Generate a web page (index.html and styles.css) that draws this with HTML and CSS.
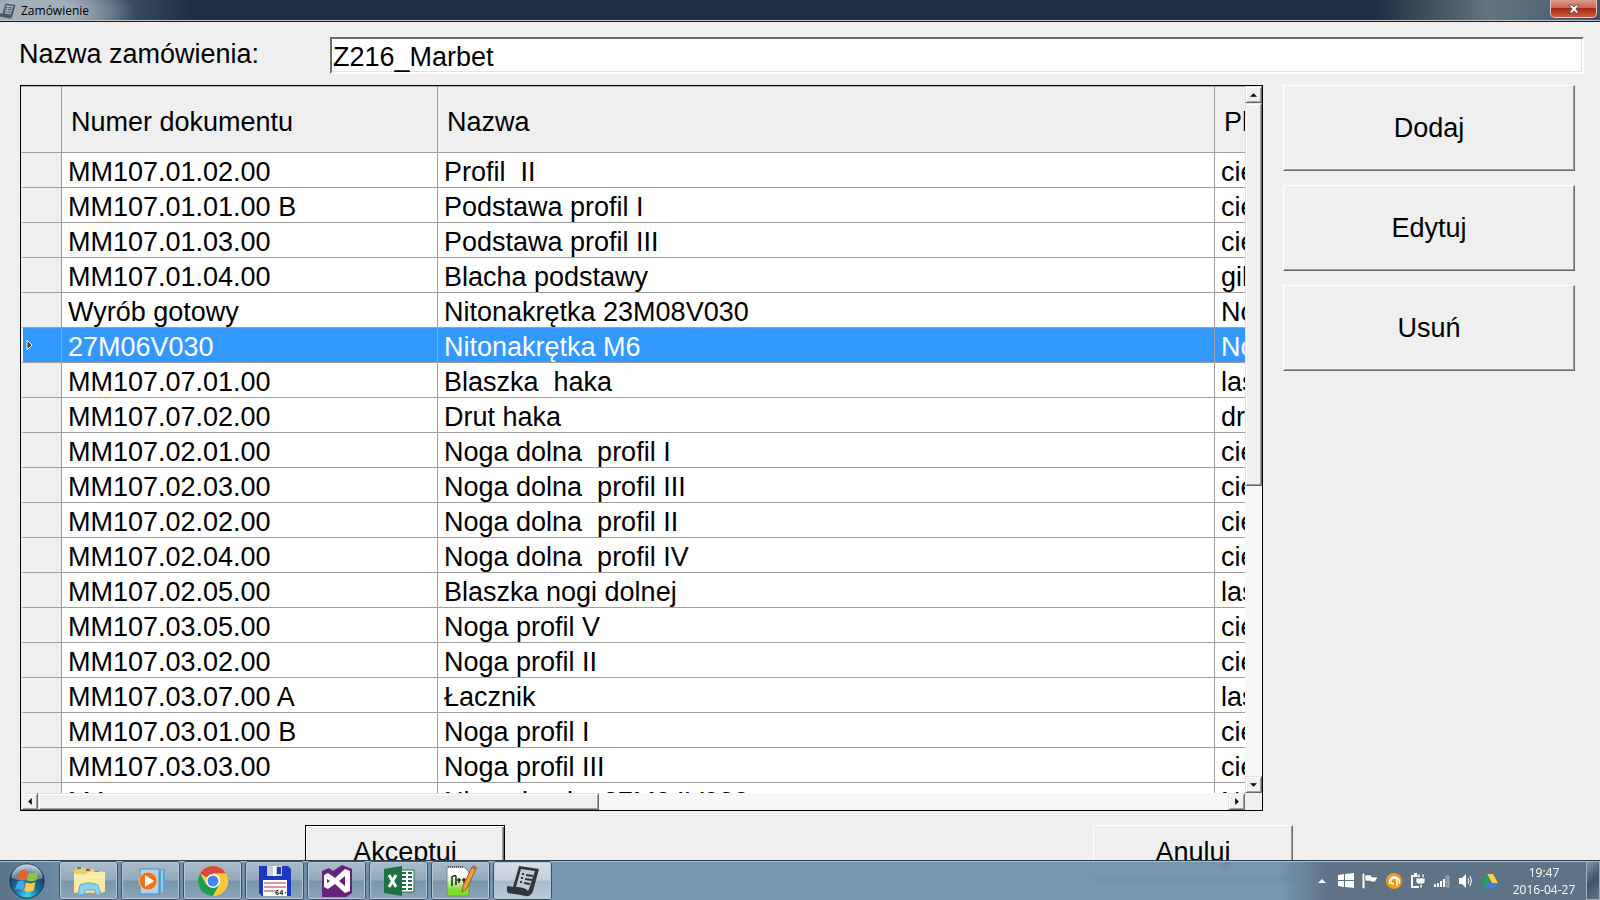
FILE: index.html
```html
<!DOCTYPE html>
<html lang="pl">
<head>
<meta charset="utf-8">
<title>Zamówienie</title>
<link rel="stylesheet" href="styles.css">
</head>
<body>
<div class="window">
  <header class="titlebar">
    <svg class="title-icon" viewBox="0 0 32 32"><path d="M11 1l20 3-6 22q-2 6-6 5L0 27q-1-4 0-6h5z" fill="#4b575f"/><path d="M13 4l14 2-6 18q-3-3-12-3z" fill="#a3aeb6"/><path d="M13 9h2M17 9l7 1M12 13h2M16 13l7 1M11 18h2M15 18l6 1" stroke="#4b575f" stroke-width="2"/></svg>
    <span class="title-text">Zamówienie</span>
    <button class="close" aria-label="Zamknij"><svg viewBox="0 0 12 10"><path d="M1 1h3l2 2 2-2h3L8 5l3 4H8L6 7 4 9H1l3-4z" fill="#fff" stroke="#4a2a2a" stroke-width=".7"/></svg></button>
  </header>
  <form class="name-row">
    <label for="order-name">Nazwa zamówienia:</label>
    <input id="order-name" type="text" value="Z216_Marbet">
  </form>
  <main class="content">
    <section class="grid">
      <div class="viewport">
        <table>
          <colgroup><col class="c-mark"><col class="c-number"><col class="c-name"><col class="c-plan"></colgroup>
          <thead><tr><th></th><th>Numer dokumentu</th><th>Nazwa</th><th>Pl</th></tr></thead>
          <tbody>
            <tr><th></th><td>MM107.01.02.00</td><td>Profil  II</td><td>cie</td></tr>
            <tr><th></th><td>MM107.01.01.00 B</td><td>Podstawa profil I</td><td>cie</td></tr>
            <tr><th></th><td>MM107.01.03.00</td><td>Podstawa profil III</td><td>cie</td></tr>
            <tr><th></th><td>MM107.01.04.00</td><td>Blacha podstawy</td><td>gil</td></tr>
            <tr><th></th><td>Wyrób gotowy</td><td>Nitonakrętka 23M08V030</td><td>No</td></tr>
            <tr class="selected"><th><svg class="marker" viewBox="0 0 7 12"><path d="M1 1l5 5-5 5z" fill="#404040" stroke="#fff"/></svg></th><td>27M06V030</td><td>Nitonakrętka M6</td><td>No</td></tr>
            <tr><th></th><td>MM107.07.01.00</td><td>Blaszka  haka</td><td>las</td></tr>
            <tr><th></th><td>MM107.07.02.00</td><td>Drut haka</td><td>dr</td></tr>
            <tr><th></th><td>MM107.02.01.00</td><td>Noga dolna  profil I</td><td>cie</td></tr>
            <tr><th></th><td>MM107.02.03.00</td><td>Noga dolna  profil III</td><td>cie</td></tr>
            <tr><th></th><td>MM107.02.02.00</td><td>Noga dolna  profil II</td><td>cie</td></tr>
            <tr><th></th><td>MM107.02.04.00</td><td>Noga dolna  profil IV</td><td>cie</td></tr>
            <tr><th></th><td>MM107.02.05.00</td><td>Blaszka nogi dolnej</td><td>las</td></tr>
            <tr><th></th><td>MM107.03.05.00</td><td>Noga profil V</td><td>cie</td></tr>
            <tr><th></th><td>MM107.03.02.00</td><td>Noga profil II</td><td>cie</td></tr>
            <tr><th></th><td>MM107.03.07.00 A</td><td>Łacznik</td><td>las</td></tr>
            <tr><th></th><td>MM107.03.01.00 B</td><td>Noga profil I</td><td>cie</td></tr>
            <tr><th></th><td>MM107.03.03.00</td><td>Noga profil III</td><td>cie</td></tr>
            <tr><th></th><td>M4</td><td>Nitonakrętka 27M04V030</td><td>No</td></tr>
          </tbody>
        </table>
      </div>
      <div class="scroll vertical">
        <button class="arrow" aria-label="W górę"><svg viewBox="0 0 8 4"><path d="M4 0l4 4H0z"/></svg></button>
        <div class="thumb"></div>
        <div class="track"></div>
        <button class="arrow" aria-label="W dół"><svg viewBox="0 0 8 4"><path d="M0 0h8L4 4z"/></svg></button>
      </div>
      <div class="scroll horizontal">
        <button class="arrow" aria-label="W lewo"><svg class="side" viewBox="0 0 4 8"><path d="M4 0v8L0 4z"/></svg></button>
        <div class="thumb"></div>
        <div class="track"></div>
        <button class="arrow" aria-label="W prawo"><svg class="side" viewBox="0 0 4 8"><path d="M0 0l4 4-4 4z"/></svg></button>
      </div>
      <div class="corner"></div>
    </section>
    <aside class="actions">
      <button class="btn">Dodaj</button>
      <button class="btn">Edytuj</button>
      <button class="btn">Usuń</button>
    </aside>
  </main>
  <footer class="confirm">
    <button class="btn default">Akceptuj</button>
    <button class="btn">Anuluj</button>
  </footer>
</div>
<nav class="taskbar">
  <button class="start" aria-label="Start"><svg viewBox="0 0 40 40">
    <defs><radialGradient id="orb" cx=".5" cy=".95" r=".9"><stop offset="0" stop-color="#3fe0f5"/><stop offset=".4" stop-color="#1670a5"/><stop offset=".75" stop-color="#1b4468"/><stop offset="1" stop-color="#9db6c8"/></radialGradient></defs>
    <circle cx="20" cy="20" r="18" fill="url(#orb)" stroke="#16324a"/><path d="M4 17a16 15 0 0 1 32 0q-16 5-32 0z" fill="#fff" opacity=".35"/>
    <path d="M12 10q5-3 9 0l-2 9q-5-3-9 0z" fill="#e8602c"/><path d="M22 11q4 2 10-1l-2 9q-6 3-10 0z" fill="#8fc53c"/><path d="M10 21q4-3 8 0l-2 9q-4-3-9 0z" fill="#4aa5e0"/><path d="M19 21q4 3 10 0l-2 9q-6 3-10 0z" fill="#fbcb3b"/></svg></button>
  <button class="task" aria-label="Eksplorator"><svg viewBox="0 0 32 32"><path d="M2 5l1-3h7l2 2h9l1 2h8v22H1V5z" fill="#e9cd6c"/><path d="M4 2h4v2H4z" fill="#28a745"/><path d="M13 4h4v2h-4z" fill="#d33"/><path d="M22 6h4v2h-4z" fill="#4a90e2"/><path d="M1 9h12l2-2h17v20H1z" fill="#f8e9a4"/><path d="M1 12h31" stroke="#fff5c8"/><path d="M5 30l2-10q9-4 18 0l3 10h-5l-1-5H12l-1 5z" fill="#8fd0ee" stroke="#58a7cf"/></svg></button>
  <button class="task" aria-label="Odtwarzacz"><svg viewBox="0 0 32 32"><path d="M12 4h18v23H12z" fill="#5da5cf"/><path d="M5 4h19v25H5z" fill="#a8d5ed" stroke="#4b8fba"/><path d="M27 5v22" stroke="#d6eefa"/><circle cx="13" cy="16" r="9" fill="#ef7418" stroke="#f9c08d"/><path d="M10 10l9 6-9 6z" fill="#fff"/></svg></button>
  <button class="task" aria-label="Chrome"><svg viewBox="0 0 32 32"><circle cx="16" cy="16" r="15" fill="#fcc934"/><path d="M16 16L3 8.500A15 15 0 0 1 29 8.500H16z" fill="#d94a3d"/><path d="M3 8.500A15 15 0 0 0 16 31l6.500-11.500L16 16 9.500 19.700z" fill="#1e9b55"/><path d="M16 8.500h13A15 15 0 0 1 16 31l6.500-11.300z" fill="#fcc934"/><circle cx="16" cy="16" r="7" fill="#fff"/><circle cx="16" cy="16" r="5.500" fill="#4384f3"/></svg></button>
  <button class="task" aria-label="Total Commander"><svg viewBox="0 0 32 32"><path d="M0 1h29l3 3v27H3l-3-3z" fill="#1b37c4"/><path d="M8 1h15v10H8z" fill="#c9ced9"/><path d="M14 1h3v10h-3z" fill="#fff"/><path d="M18 2h4v7h-4z" fill="#1b37c4"/><path d="M4 15h24v16H4z" fill="#fff"/><path d="M5 18h22M5 22h22M5 26h11" stroke="#b52e48"/><text x="16" y="30" class="floppy-text">64·</text></svg></button>
  <button class="task" aria-label="Visual Studio"><svg viewBox="0 0 32 32"><path d="M1 6l7-3 4 3 9-6 10 4v24l-6 4H1z" fill="#68217a"/><path d="M3 10l4-2 7 5 10-9 5 2v20l-5 2-10-9-7 5-4-2zm3 4v4l3-2zm12 2l6 5V11z" fill="#fff" fill-rule="evenodd"/></svg></button>
  <button class="task" aria-label="Excel"><svg viewBox="0 0 32 32"><path d="M17 5h14v22H17z" fill="#fff" stroke="#1e7145"/><path d="M19 8h4M25 8h4M19 12h4M25 12h4M19 16h4M25 16h4M19 20h4M25 20h4M19 24h4M25 24h4" stroke="#1e7145" stroke-width="2"/><path d="M1 4l18-3v30L1 28z" fill="#1e7145"/><path d="M6 10l7 12M13 10L6 22" stroke="#fff" stroke-width="3"/></svg></button>
  <button class="task" aria-label="Notepad++"><svg viewBox="0 0 32 32"><defs><linearGradient id="note" x2="0" y2="1"><stop offset=".3" stop-color="#fff"/><stop offset=".8" stop-color="#7bdc2c"/></linearGradient></defs><path d="M2 2h17l5 5v24H2z" fill="url(#note)" stroke="#7c8a79"/><path d="M3 2h16" stroke="#555" stroke-width="2" stroke-dasharray="1 1"/><path d="M7 21v-9q4-3 4 0v8M12 15h4M14 13v5M17 15h4M19 13v5" fill="none" stroke="#222" stroke-width="1.500"/><path d="M17 27l1-6L27 2l4 2-9 19z" fill="#f0a035" stroke="#9b5a22"/><path d="M27 3l1-3 4 2-1 3z" fill="#c55"/></svg></button>
  <button class="task active" aria-label="Zamówienie"><svg viewBox="0 0 32 32"><path d="M12 1l20 3-6 22q-2 6-7 5L1 28q-2-3-1-7l6 1z" fill="#30373c"/><path d="M14 4l14 2-6 18-1 2q-3-4-12-4z" fill="#c0cdd7"/><path d="M15 9h2M19 10l7 1M14 13h2M18 14l7 1M13 17h2M17 18l6 1" stroke="#30373c" stroke-width="2"/></svg></button>
  <div class="tray">
    <svg viewBox="0 0 16 16"><path d="M4 10l4-4 4 4z" fill="#fff"/></svg>
    <svg viewBox="0 0 16 16"><path d="M0 2l6-1v6H0zM7 1l9-1v7H7zM0 8h6v6l-6-1zM7 8h9v7l-9-1z" fill="#fff"/></svg>
    <svg viewBox="0 0 16 16"><path d="M1 1h1v14H1z" fill="#fff" stroke="#fff"/><path d="M3 2h6l1 2h6l-3 5H9L8 8H3z" fill="#fff" stroke="#33424e" stroke-width=".5"/></svg>
    <svg viewBox="0 0 16 16"><circle cx="8" cy="8" r="8" fill="#f49b16"/><path d="M11 13V8a3 3 0 1 0-3 3M4 11a5 5 0 1 1 9 0" fill="none" stroke="#fff" stroke-width="1.500"/></svg>
    <svg viewBox="0 0 16 16"><path d="M8 3H2v11h7M4 1h3" fill="none" stroke="#fff" stroke-width="2"/><path d="M6 5h9v4l-2 2H8L6 9zM8 1h2v4H8zM12 1h2v4h-2zM10 11h2v4h-2z" fill="#fff" stroke="#43525f" stroke-width=".5"/></svg>
    <svg viewBox="0 0 16 16"><path d="M0 11h2v3H0zM3 10h2v4H3zM6 8h2v6H6zM9 6h2v8H9z" fill="#fff"/><path d="M12 3h3v11h-3z" fill="#8093a2" stroke="#c8d2da" stroke-width=".5"/></svg>
    <svg viewBox="0 0 16 16"><path d="M1 5h3l4-4v14l-4-4H1z" fill="#fff"/><path d="M10 5q2 3 0 6M12 3q3 5 0 10" fill="none" stroke="#fff"/></svg>
    <svg viewBox="0 0 16 16"><path d="M5 1h6l5 9h-6z" fill="#fcd04b"/><path d="M5 1l3 5-5 9-3-5z" fill="#1da462"/><path d="M6 10h10l-3 5H3z" fill="#3f7fe8"/></svg>
  </div>
  <time class="clock"><span>19:47</span><span>2016-04-27</span></time>
  <button class="peek" aria-label="Pokaż pulpit"></button>
</nav>
</body>
</html>
```
FILE: styles.css
```css
* { box-sizing: border-box; }
body {
  margin: 0;
  height: 100vh;
  overflow: hidden;
  background: #efefef;
  color: #000;
  font-family: "Liberation Sans", Arial, sans-serif;
  font-size: 27px;
  line-height: 30px;
}
button { padding: 0; border: 0; font: inherit; color: inherit; }
svg { display: block; }

.window { display: flex; flex-direction: column; height: 100vh; padding-bottom: 20px; }
.titlebar {
  display: flex;
  flex: none;
  height: 22px;
  padding-right: 3px;
  border-bottom: 1px solid #14202c;
  background:
    radial-gradient(ellipse 100px 34px at 36px 12px, #a3b0ba 40%, transparent),
    linear-gradient(90deg, #5e7485 0, #4b6072 90px, #1f3042 190px, #1f3042 86%, #64757f 93%, #55697a 96%, #405466);
  box-shadow: inset 0 -1px #b8c3cb;
}
.title-icon { width: 16px; height: 16px; margin-top: 3px; }
.title-text { flex: 1; margin-left: 5px; font: 12px/21px "Open Sans", sans-serif; }
.close {
  display: flex;
  justify-content: center;
  align-items: center;
  width: 47px;
  height: 18px;
  border: 1px solid #e3c5bf;
  border-top: 0;
  border-radius: 0 0 5px 5px;
  background: linear-gradient(#d99a8b 0, #c96a55 45%, #a62c14 50%, #cf5a3c 100%);
}
.close svg { width: 12px; height: 10px; }

.name-row { display: flex; flex: none; padding: 15px 16px 0 19px; }
.name-row label { width: 311px; padding-top: 2px; }
.name-row input {
  flex: 1;
  min-width: 0;
  height: 37px;
  padding: 3px 1px 0;
  border: 2px solid;
  border-color: #6e6e6e #fff #fff #6e6e6e;
  background: #fff;
  box-shadow: inset -1px -1px #e3e3e3;
  color: #000;
  font: inherit;
}

.content { display: flex; flex: 1; gap: 20px; min-height: 0; padding: 11px 25px 0 20px; }
.grid {
  display: grid;
  flex: 1;
  grid-template: minmax(0, 1fr) 17px / minmax(0, 1fr) 17px;
  min-width: 0;
  border: 1px solid #000;
}
.viewport { overflow: hidden; background: #fff; }
table { width: 1500px; border-collapse: separate; border-spacing: 0; table-layout: fixed; }
.c-mark { width: 41px; }
.c-number { width: 376px; }
.c-name { width: 777px; }
th, td {
  height: 35px;
  padding: 4px 6px 0;
  border-right: 1px solid #a0a0a0;
  border-bottom: 1px solid #a0a0a0;
  font-weight: normal;
  line-height: 30px;
  text-align: left;
  vertical-align: top;
  white-space: pre;
}
th { background: #efefef; }
thead th { height: 67px; padding: 21px 9px 0; box-shadow: inset 0 1px #b0b0b0; }
.selected td, .selected th { background: #3399ff; color: #fff; }
tbody th { padding: 11px 3px 0; border-left: 2px solid #efefef; }
.marker { width: 7px; height: 12px; }

.scroll { display: flex; background: #f7f7f7; }
.vertical { flex-direction: column; }
.horizontal { flex-direction: row; }
.arrow, .thumb {
  border: 1px solid;
  border-color: #e3e3e3 #696969 #696969 #e3e3e3;
  background: #efefef;
  box-shadow: inset 1px 1px #fff, inset -1px -1px #a0a0a0;
}
.arrow { display: flex; flex: none; justify-content: center; align-items: center; width: 17px; height: 17px; }
.arrow svg { width: 7px; height: 4px; }
.arrow .side { width: 4px; height: 7px; }
.vertical .thumb { flex: 382; }
.vertical .track { flex: 291; }
.horizontal .thumb { flex: 560; }
.horizontal .track { flex: 630; }
.corner { background: #efefef; }

.btn {
  height: 86px;
  border: 1px solid;
  border-color: #fff #696969 #696969 #fff;
  background: #efefef;
  box-shadow: inset -1px -1px #a0a0a0;
}
.actions { display: flex; flex: none; flex-direction: column; gap: 14px; width: 292px; }
.confirm { display: flex; flex: none; justify-content: space-around; padding: 14px 13px 0 11px; }
.confirm .btn { width: 200px; height: 55px; padding-bottom: 2px; }
.confirm .default {
  border-color: #000;
  box-shadow: inset 1px 1px #fff, inset -1px -1px #696969, inset -2px -2px #a0a0a0;
}

.taskbar {
  position: fixed;
  right: 0;
  bottom: 0;
  left: 0;
  display: flex;
  gap: 3px;
  height: 40px;
  border-top: 1px solid #2c4052;
  background: linear-gradient(90deg, rgba(66, 93, 118, .85) 0, rgba(87, 121, 151, .85) 60px, rgba(99, 134, 165, .85) 550px, rgba(99, 134, 165, .85) 80%, rgba(67, 93, 115, .85) 83%, rgba(67, 93, 115, .85));
  box-shadow: inset 0 1px #a9bac8;
  backdrop-filter: blur(3px);
}
.start { width: 56px; padding-left: 8px; background: none; }
.start svg { width: 38px; height: 38px; }
.task {
  display: flex;
  justify-content: center;
  align-items: center;
  width: 59px;
  border: 1px solid #dce6ee;
  border-radius: 3px;
  outline: 1px solid #3b5064;
  outline-offset: -1px;
  background: linear-gradient(#a9bccb 0, #93aabc 48%, #7b95aa 52%, #8ba6ba);
  box-shadow: inset 0 0 0 1px #b7c8d5;
}
.task svg { width: 32px; height: 32px; }
.task.active { background: linear-gradient(#d8e0e8 0, #c3d0db 48%, #a9bccb 52%, #b9cbd8); }
.floppy-text { font: bold 7px "Liberation Mono", monospace; }
.tray { display: flex; align-items: center; gap: 8px; margin-left: auto; }
.tray svg { width: 16px; height: 16px; }
.clock {
  display: flex;
  flex-direction: column;
  width: 82px;
  padding: 3px 0 0 4px;
  color: #fff;
  font: 12px/17px "Open Sans", sans-serif;
  text-align: center;
}
.peek { width: 14px; border: 1px solid #9fb0be; background: linear-gradient(135deg, #8497a7, #3d546a 50%, #5f768a); }
```
